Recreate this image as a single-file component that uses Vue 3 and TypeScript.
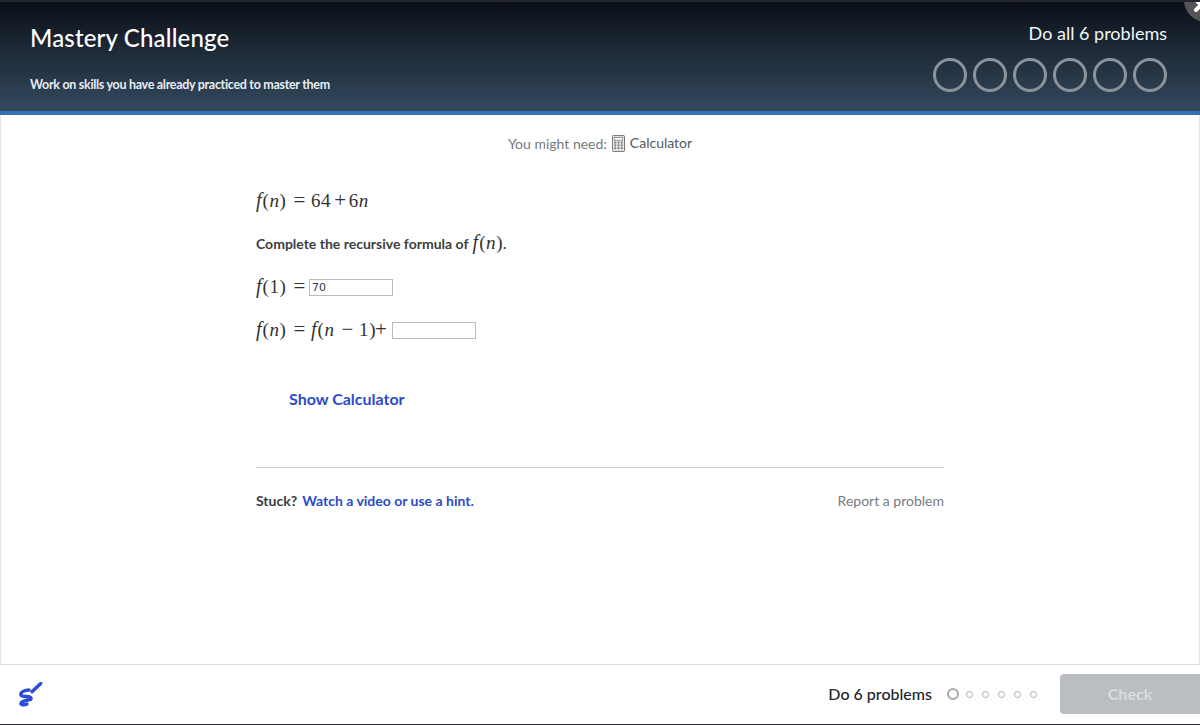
<script setup lang="ts">
const problems = [1, 2, 3, 4, 5, 6]
</script>

<template>
  <div class="page">
    <header class="head">
      <div class="head-left">
        <h1 class="title">Mastery Challenge</h1>
        <p class="subtitle">Work on skills you have already practiced to master them</p>
      </div>
      <div class="head-right">
        <div class="goal">Do all 6 problems</div>
        <div class="rings">
          <span v-for="n in problems" :key="n" class="ring"></span>
        </div>
      </div>
      <div class="close">
        <svg width="24" height="24" viewBox="0 0 24 24">
          <path d="M12 0 L22 10 M22 0 L12 10" stroke="#fff" stroke-width="4" stroke-linecap="round" />
        </svg>
      </div>
    </header>

    <main class="main">
      <div class="tools">
        <span class="tools-label">You might need:</span>
        <svg class="calc" width="13" height="17" viewBox="0 0 14 18">
          <rect x="0.5" y="0.5" width="13" height="17" rx="1" fill="#e9e9e9" stroke="#666" />
          <rect x="2.5" y="2.5" width="9" height="3" fill="#fff" stroke="#777" stroke-width="0.8" />
          <g fill="#777">
            <rect x="2.5" y="7" width="2" height="2" />
            <rect x="6" y="7" width="2" height="2" />
            <rect x="9.5" y="7" width="2" height="2" />
            <rect x="2.5" y="10" width="2" height="2" />
            <rect x="6" y="10" width="2" height="2" />
            <rect x="9.5" y="10" width="2" height="2" />
            <rect x="2.5" y="13" width="2" height="2" />
            <rect x="6" y="13" width="2" height="2" />
            <rect x="9.5" y="13" width="2" height="2" />
          </g>
        </svg>
        <span class="tools-name">Calculator</span>
      </div>

      <div class="column">
        <div class="line math"><i class="f">f</i>(<i>n</i>)<span class="op">=</span>64<span class="plus">+</span>6<i>n</i></div>
        <div class="line question">
          Complete the recursive formula of <span class="math inline"><i class="f">f</i>(<i>n</i>)</span>.
        </div>
        <div class="line math"><i class="f">f</i>(1)<span class="op tight">=</span><input class="answer" type="text" value="70" /></div>
        <div class="line math"><i class="f">f</i>(<i>n</i>)<span class="op">=</span><i class="f">f</i>(<i>n</i><span class="op">−</span>1)<span class="end">+</span><input class="answer" type="text" /></div>

        <a class="show-calc">Show Calculator</a>

        <div class="stuck">
          <div>
            <span class="stuck-label">Stuck?</span>
            <a class="hint">Watch a video or use a hint.</a>
          </div>
          <a class="report">Report a problem</a>
        </div>
      </div>
    </main>

    <footer class="foot">
      <svg class="logo" width="26" height="28" viewBox="0 0 26 28">
        <path
          d="M12 10 C8 10 3 12 4 15 C5 18 13 15 14 18 C15 21 7 19 4 23 C3 25 7 25.5 10 24"
          fill="none"
          stroke="#2c4bd6"
          stroke-width="3.4"
          stroke-linecap="round"
        />
        <path d="M15 11.7 L23.7 3.5" stroke="#2c4bd6" stroke-width="3.4" stroke-linecap="round" />
      </svg>
      <div class="foot-right">
        <span class="foot-goal">Do 6 problems</span>
        <div class="dots">
          <span class="dot current"></span>
          <span v-for="n in 5" :key="n" class="dot"></span>
        </div>
        <button class="check" type="button">Check</button>
      </div>
    </footer>
  </div>
</template>

<style>
  html,
  body {
    margin: 0;
    background: #fff;
  }
</style>

<style scoped>
  .page {
    display: flex;
    flex-direction: column;
    width: 1200px;
    height: 725px;
    overflow: hidden;
    font-family: Lato, "Open Sans", sans-serif;
    color: #333;
  }

  .head {
    position: relative;
    display: flex;
    justify-content: space-between;
    box-sizing: border-box;
    height: 115px;
    padding: 0 33px 0 30px;
    overflow: hidden;
    background: linear-gradient(#0b1018, #34495e);
    border-top: 2px solid #22262e;
    border-bottom: 4px solid #3271b9;
    color: #fff;
  }

  .title {
    margin: 20px 0 0;
    font-size: 24px;
    line-height: 32px;
    font-weight: 500;
    letter-spacing: 0.17px;
  }

  .subtitle {
    margin: 21px 0 0;
    font-size: 12.5px;
    line-height: 20px;
    font-weight: 700;
    letter-spacing: -0.3px;
    color: #e8edf2;
  }

  .head-right {
    display: flex;
    flex-direction: column;
    align-items: flex-end;
  }

  .goal {
    margin-top: 19px;
    font-size: 18px;
    line-height: 24px;
    color: #f2f5f8;
  }

  .rings {
    display: flex;
    gap: 6px;
    margin-top: 13px;
  }

  .ring {
    box-sizing: border-box;
    width: 34px;
    height: 34px;
    border: 3px solid #8c9299;
    border-radius: 50%;
  }

  .close {
    position: absolute;
    top: -24px;
    right: -28px;
    box-sizing: border-box;
    width: 44px;
    height: 44px;
    padding-top: 22px;
    background: #555;
    border-radius: 50%;
  }

  .close svg {
    display: block;
  }

  .main {
    flex: 1;
    box-sizing: border-box;
    padding-top: 17px;
    border-left: 1px solid #e3e8f0;
    border-right: 1px solid #e3e8f0;
  }

  .tools {
    display: flex;
    justify-content: center;
    align-items: center;
    gap: 5px;
    height: 22px;
    font-size: 14px;
  }

  .tools-label {
    color: #777b80;
  }

  .tools-name {
    margin-bottom: 2px;
    color: #55595e;
  }

  .calc {
    margin-top: 1px;
  }

  .column {
    width: 688px;
    margin: 0 auto;
    padding-top: 31px;
  }

  .line {
    height: 30px;
    margin-bottom: 13px;
    line-height: 30px;
  }

  .math {
    font-family: "Liberation Serif", "DejaVu Serif", serif;
    font-size: 19px;
    letter-spacing: 0.6px;
    color: #333;
  }

  .f {
    margin-right: 1px;
    font-size: 20px;
    letter-spacing: 0;
  }

  .op,
  .plus,
  .end {
    font-size: 21px;
  }

  .op {
    margin: 0 5px 0 7px;
  }

  .op.tight {
    margin-right: 3px;
  }

  .plus {
    margin: 0 2px 0 3px;
  }

  .end {
    margin: 0 4px 0 -1px;
  }

  .inline {
    margin-left: 1px;
    font-weight: 400;
  }

  .question {
    line-height: 28px;
    font-size: 14px;
    font-weight: 700;
    color: #3b3e40;
  }

  .answer {
    box-sizing: border-box;
    width: 84px;
    height: 17px;
    margin: 0 0 2px;
    padding: 0 2px;
    border: 1px solid #bbb;
    border-radius: 0;
    vertical-align: middle;
    font-family: "DejaVu Sans", sans-serif;
    font-size: 11px;
    color: #333;
    background: #fff;
  }

  .show-calc {
    display: block;
    margin: 43px 0 0 33px;
    font-size: 16px;
    line-height: 24px;
    font-weight: 700;
    color: #2c4bc8;
  }

  .stuck {
    display: flex;
    justify-content: space-between;
    align-items: center;
    margin-top: 56px;
    padding-top: 22px;
    border-top: 1px solid #ccc;
    font-size: 14px;
    line-height: 22px;
  }

  .stuck-label {
    margin-right: 5px;
    font-weight: 700;
    color: #3b3e40;
  }

  .hint {
    font-weight: 700;
    color: #2c4bc8;
  }

  .report {
    color: #777b80;
  }

  .foot {
    display: flex;
    justify-content: space-between;
    align-items: center;
    box-sizing: border-box;
    height: 61px;
    padding: 0 0 1px 17px;
    border-top: 1px solid #d8dde6;
    border-bottom: 1px solid #2a2d33;
  }

  .foot-right {
    display: flex;
    align-items: center;
  }

  .foot-goal {
    margin-bottom: 2px;
    font-size: 16px;
    font-weight: 500;
    color: #21242c;
  }

  .dots {
    display: flex;
    align-items: center;
    gap: 9px;
    margin: 0 23px 0 15px;
  }

  .dot {
    box-sizing: border-box;
    width: 7px;
    height: 7px;
    border: 1.5px solid #aaa;
    border-radius: 50%;
  }

  .dot.current {
    width: 12px;
    height: 12px;
    margin-right: -2px;
    border-width: 2px;
  }

  .check {
    width: 140px;
    height: 40px;
    padding: 0 0 2px;
    border: none;
    border-radius: 4px 0 0 4px;
    background: #babec2;
    font-family: inherit;
    font-size: 16px;
    font-weight: 700;
    color: #d9dcde;
  }
</style>
